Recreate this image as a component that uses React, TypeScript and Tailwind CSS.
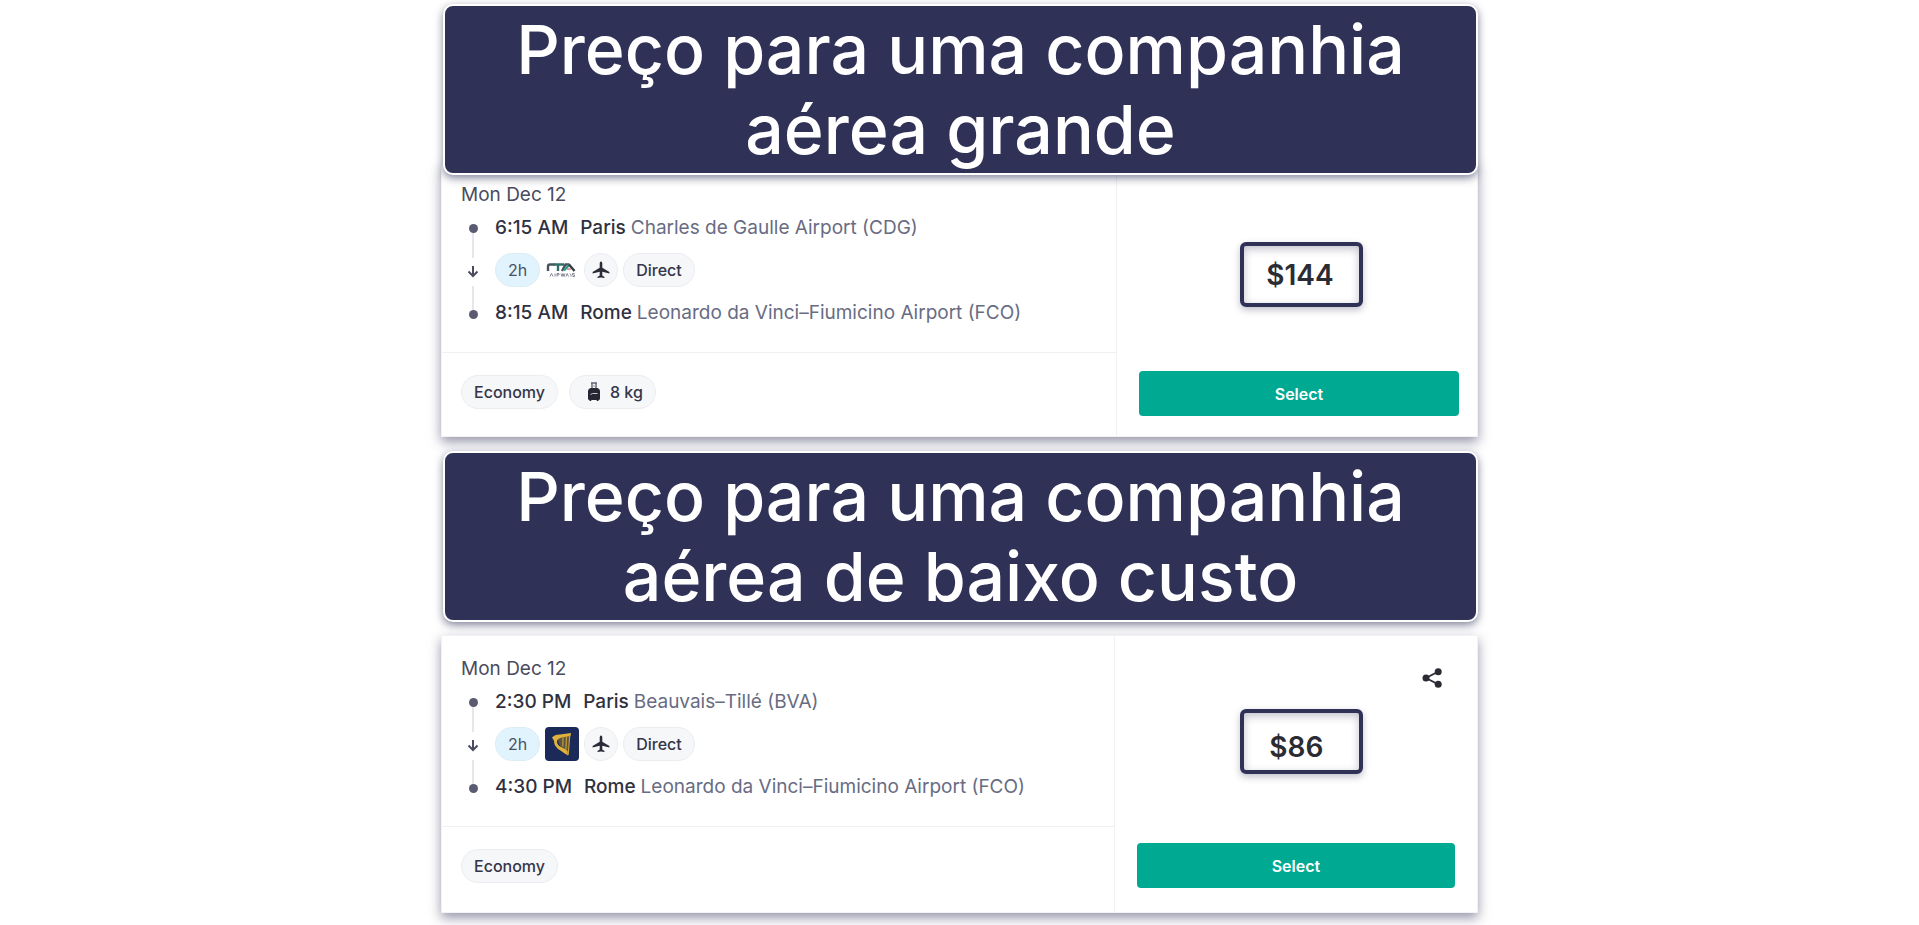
import React from 'react';

interface Stop {
    time: string;
    city: string;
    airport: string;
}

interface Flight {
    date: string;
    from: Stop;
    to: Stop;
    duration: string;
    airline: 'ita' | 'ryanair';
    baggage?: string;
    price: string;
    shareable: boolean;
}

const largeAirline: Flight = {
    date: 'Mon Dec 12',
    from: { time: '6:15 AM', city: 'Paris', airport: 'Charles de Gaulle Airport (CDG)' },
    to: { time: '8:15 AM', city: 'Rome', airport: 'Leonardo da Vinci–Fiumicino Airport (FCO)' },
    duration: '2h',
    airline: 'ita',
    baggage: '8 kg',
    price: '$144',
    shareable: false,
};

const lowCostAirline: Flight = {
    date: 'Mon Dec 12',
    from: { time: '2:30 PM', city: 'Paris', airport: 'Beauvais–Tillé (BVA)' },
    to: { time: '4:30 PM', city: 'Rome', airport: 'Leonardo da Vinci–Fiumicino Airport (FCO)' },
    duration: '2h',
    airline: 'ryanair',
    price: '$86',
    shareable: true,
};

const ItaLogo = () => (
    <svg viewBox="0 0 34 34" className="size-[34px]" role="img" aria-label="ITA Airways">
        <g fill="none" strokeWidth="2.400">
            <path d="M3 18v-4.500q0-2 2-2h5" stroke="#4a525c" />
            <path d="M9 11.500h10M13 11.500v6.500" stroke="#2f6f68" />
            <path d="M17 18l3.500-6.500h4" stroke="#4a525c" />
            <path d="M19 17.500l5-5.500" stroke="#2a9c86" />
            <path d="M24 11.500l5.500 6.500" stroke="#343a48" />
            <path d="M22 16h4" stroke="#c9605c" strokeWidth="1.200" />
        </g>
        <path d="M5 23.500l1.500-3 1.500 3M10 20.500v3M12 23.500v-3h2v1.500h-2M16 20.500l1 3 1-3 1 3 1-3M21 23.500l1.200-3 1.300 3M25 20.500l1 1.500v1.500M29.500 20.500h-2v1.500h2v1.500h-2" fill="none" stroke="#858994" strokeWidth="1" />
    </svg>
);

const RyanairLogo = () => (
    <svg viewBox="0 0 34 34" className="size-[34px] rounded" role="img" aria-label="Ryanair">
        <rect width="34" height="34" fill="#1b2a59" />
        <path d="M12 11L25 8.500l-2 18q-6-3.500-8-7.500z" fill="#5c5541" />
        <path d="M7 10.500q3-3.200 8-3l11-1.500-.500 3-8.500 1.500q-5.500 1-5 4.500.5 3.500 5 5.500 4 1.800 5.500 3.500l.5 4.500q-4-2.200-7.500-5-6.500-3.500-6.500-9.500l-1-2z" fill="#deb23b" />
        <path d="M24.800 8l-1.600 20M21.500 10l-.600 12.500M18 10.500l-.200 9" fill="none" stroke="#c49c3a" strokeWidth="1.200" />
    </svg>
);

const PlaneIcon = () => (
    <svg viewBox="0 0 18 18" className="size-[18px]" fill="#2b2c38" aria-hidden="true">
        <path d="M9 .5q-1.300 0-1.300 2v4.300L.6 10.900v1.700l7.100-1.900v3.800l-2.200 1.400v1.200L9 16.400l3.500.7v-1.200l-2.200-1.400v-3.800l7.100 1.900v-1.700l-7.100-4.100V2.500q0-2-1.300-2z" />
    </svg>
);

const ArrowDownIcon = () => (
    <svg viewBox="0 0 12 14" className="h-[14px] w-3" fill="none" stroke="#4a4b5e" strokeWidth="2" aria-hidden="true">
        <path d="M6 1v10M1.500 6.500L6 11l4.500-4.500" />
    </svg>
);

const BagIcon = () => (
    <svg viewBox="0 0 12 20" className="h-5 w-3" aria-hidden="true">
        <path d="M3 1h6M4 1v6M8 1v6" fill="none" stroke="#62636f" strokeWidth="1.400" />
        <path d="M4 4h4" stroke="#9a9ba5" strokeWidth="1" />
        <path d="M2.500 6h7Q12 7 12 9v7.500q0 1.500-1.500 1.500v1H8.700v-1H3.300v1H1.500v-1Q0 18 0 16.500V9q0-2 2.500-3z" fill="#262733" />
        <path d="M2.500 12.500l2-1h5" fill="none" stroke="#c9cad2" strokeWidth="1" />
    </svg>
);

const ShareIcon = () => (
    <svg viewBox="0 0 20 20" className="size-5" fill="#2b2c33" aria-hidden="true">
        <path d="M16 3.800L4 10l12 6.200" fill="none" stroke="#2b2c33" strokeWidth="1.800" />
        <circle cx="4" cy="10" r="3.500" />
        <circle cx="16.200" cy="3.700" r="3.500" />
        <circle cx="16.200" cy="16.300" r="3.500" />
    </svg>
);

const Chip = ({ children }: { children: React.ReactNode }) => (
    <span className="flex h-[34px] items-center gap-[10px] rounded-full border border-[#ebedf1] bg-[#f5f7f9] px-3 text-base font-medium text-[#343547]">
        {children}
    </span>
);

const StopRow = ({ stop }: { stop: Stop }) => (
    <p className="flex h-6 items-center whitespace-nowrap">
        <span className="mr-3 font-medium text-[#30313f]">{stop.time}</span>
        <span className="mr-[5px] font-medium text-[#30313f]">{stop.city}</span>
        <span className="text-[#686c82]">{stop.airport}</span>
    </p>
);

const Banner = ({ children }: { children: React.ReactNode }) => (
    <h2 className="relative z-10 ml-[2px] rounded-[10px] border-2 border-white bg-[#303157] px-8 pt-[3px] pb-1 text-center text-[68px] leading-[80px] font-medium text-white shadow-[0_3px_8px_rgba(47,48,86,0.6)]">
        {children}
    </h2>
);

const FlightCard = ({ flight, className }: { flight: Flight; className: string }) => (
    <article className={`flex border border-[#f3f3f6] bg-white text-[19px] leading-6 shadow-[0_5px_11px_rgba(47,48,86,0.5)] ${className}`}>
        <div className="flex min-w-0 flex-1 flex-col border-r border-[#f1f1f4]">
            <div className={`border-b border-[#f1f1f4] pb-[27px] pl-[19px] ${flight.shareable ? 'pt-[21px]' : 'pt-[19px]'}`}>
                <p className="text-[#4a4b5e]">{flight.date}</p>
                <div className="mt-[9px] flex gap-[10px]">
                    <div className="flex w-6 flex-col items-center pt-2 pb-[6px]">
                        <span className="size-[9px] rounded-full bg-[#5a5b70]" />
                        <span className="w-[2px] flex-1 bg-[#e6e7ec]" />
                        <span className="py-[7px]">
                            <ArrowDownIcon />
                        </span>
                        <span className="w-[2px] flex-1 bg-[#e6e7ec]" />
                        <span className="size-[9px] rounded-full bg-[#5a5b70]" />
                    </div>
                    <div>
                        <StopRow stop={flight.from} />
                        <div className="mt-[13px] mb-[14px] flex items-center gap-[5px]">
                            <span className="flex h-[34px] items-center rounded-full border border-[#dcecf6] bg-[#e1f3fd] px-3 text-base text-[#4a5064]">
                                {flight.duration}
                            </span>
                            {flight.airline === 'ita' ? <ItaLogo /> : <RyanairLogo />}
                            <span className="flex size-[34px] items-center justify-center rounded-full border border-[#ebedf1] bg-[#f5f7f9]">
                                <PlaneIcon />
                            </span>
                            <Chip>Direct</Chip>
                        </div>
                        <StopRow stop={flight.to} />
                    </div>
                </div>
            </div>
            <div className={`flex gap-[11px] pt-[22px] pl-[19px] ${flight.shareable ? 'pb-[29px]' : 'pb-[27px]'}`}>
                <Chip>Economy</Chip>
                {flight.baggage && (
                    <Chip>
                        <span className="ml-[6px]">
                            <BagIcon />
                        </span>
                        {flight.baggage}
                    </Chip>
                )}
            </div>
        </div>

        <div className={`flex flex-col ${flight.shareable ? 'w-[35%] pt-[32px] pb-[24px]' : 'w-[360px] pt-[78px] pb-[20px]'}`}>
            {flight.shareable && (
                <div className="mb-[21px] flex h-5 justify-end pr-[35px]">
                    <button type="button" aria-label="Share">
                        <ShareIcon />
                    </button>
                </div>
            )}
            <div className={`flex justify-center ${flight.shareable ? 'pl-[11px]' : 'pl-2'}`}>
                <p
                    className={`flex h-[65px] w-[123px] items-center justify-center rounded-md border-4 border-[#303157] text-[28px] font-semibold text-[#2b2c33] shadow-[0_3px_7px_rgba(47,48,86,0.3),inset_0_3px_8px_rgba(47,48,86,0.3)] ${flight.shareable ? 'pt-[10px] pr-[10px]' : 'pr-[2px]'}`}
                >
                    {flight.price}
                </p>
            </div>
            <button
                type="button"
                className={`mt-auto ml-[22px] h-[45px] rounded bg-[#00a991] text-base font-semibold text-white ${flight.shareable ? 'mr-[22px]' : 'mr-[18px]'}`}
            >
                Select
            </button>
        </div>
    </article>
);

export default function App() {
    return (
        <main className="min-h-screen overflow-hidden bg-white pt-1 pb-3 font-['Inter','Noto_Sans',sans-serif]">
            <div className="mx-auto max-w-[1037px]">
                <Banner>
                    Preço para uma companhia
                    <br />
                    aérea grande
                </Banner>
                <FlightCard flight={largeAirline} className="-mt-3 mb-[14px]" />
                <Banner>
                    Preço para uma companhia
                    <br />
                    aérea de baixo custo
                </Banner>
                <FlightCard flight={lowCostAirline} className="mt-[13px]" />
            </div>
        </main>
    );
}
